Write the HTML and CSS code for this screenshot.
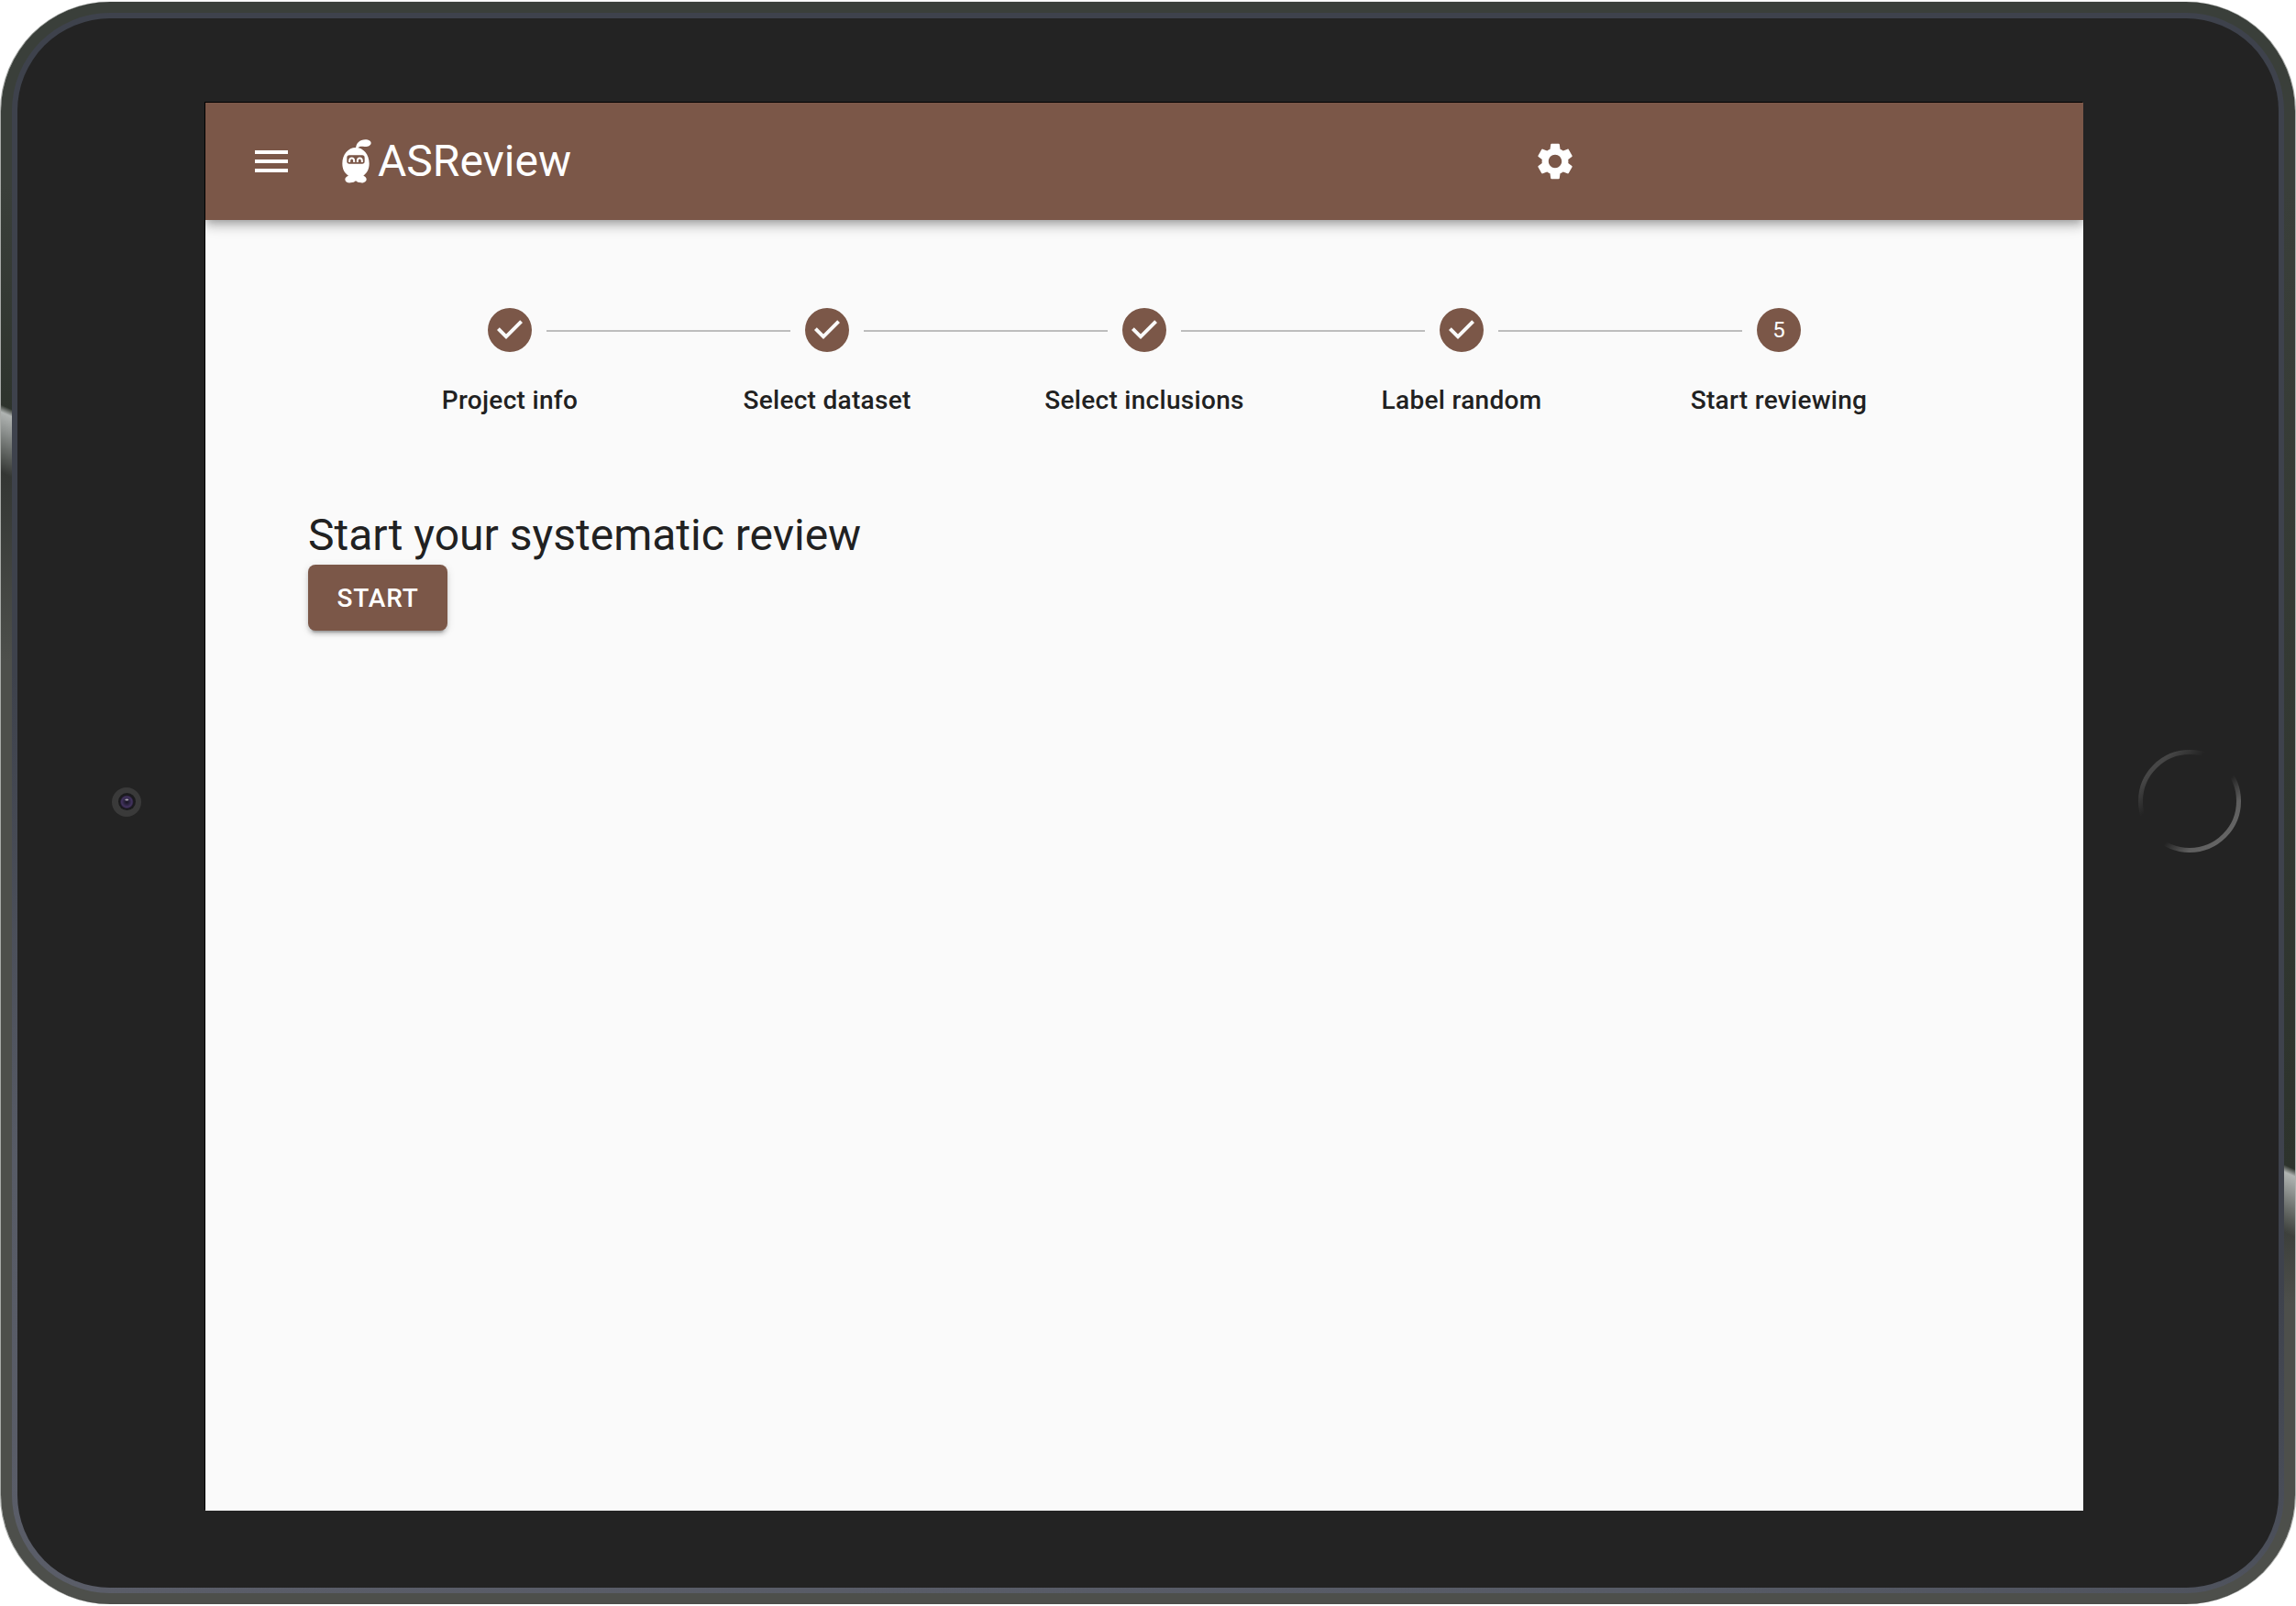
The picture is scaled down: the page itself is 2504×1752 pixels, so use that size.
FILE: index.html
```html
<!DOCTYPE html>
<html lang="en">
<head>
<meta charset="utf-8">
<title>ASReview</title>
<link rel="stylesheet" href="styles.css">
</head>
<body>
<div class="tablet">
  <span class="glint glint-left"></span>
  <span class="glint glint-right"></span>
  <div class="rim">
    <div class="bezel">
      <svg class="camera" viewBox="0 0 32 32" aria-hidden="true">
        <defs>
          <radialGradient id="lens">
            <stop offset="0" stop-color="#17131f"/>
            <stop offset=".4" stop-color="#2c2440"/>
            <stop offset=".75" stop-color="#43335f"/>
            <stop offset="1" stop-color="#17151c"/>
          </radialGradient>
        </defs>
        <circle cx="16" cy="16" r="16" fill="#3a3a3a"/>
        <circle cx="16.5" cy="15.5" r="9.5" fill="#1b1b1d"/>
        <circle cx="16.3" cy="15.8" r="7.6" fill="url(#lens)"/>
        <ellipse cx="16.3" cy="13.5" rx="2" ry="1" fill="#a8a4b0"/>
      </svg>
      <main class="screen">
        <header class="app-bar">
          <svg class="icon" viewBox="0 0 24 24"><path d="M3 18h18v-2H3v2zm0-5h18v-2H3v2zm0-7v2h18V6H3z"/></svg>
          <div class="brand">
            <svg class="mascot" viewBox="0 0 96 144">
              <path d="M45 30C46 13 58 1 76 1C88 1 95 6 95 12C95 20 84 25 74 24C64 23 57 21 51 29Z"/>
              <path d="M45 27C70 27 89 50 89 79C89 99 81 111 70 119C77 121 80 126 80 131C80 138 71 143 62 142C54 142 49 139 45 136C41 139 36 142 28 142C18 143 10 138 10 131C10 126 14 121 21 119C9 111 1 99 1 79C1 50 20 27 45 27Z"/>
              <rect class="visor" x="16" y="52" width="58" height="28" rx="8"/>
              <path class="eyes" d="M24.500 75V70Q25 61.500 32 61.500Q39 61.500 39.500 70V75M50.500 75V70Q51 61.500 58 61.500Q65 61.500 65.500 70V75"/>
            </svg>
            <span class="brand-name">ASReview</span>
          </div>
          <svg class="icon settings" viewBox="0 0 24 24"><path d="M19.14 12.94c.04-.3.06-.61.06-.94 0-.32-.02-.64-.07-.94l2.03-1.58c.18-.14.23-.41.12-.61l-1.92-3.32c-.12-.22-.37-.29-.59-.22l-2.39.96c-.5-.38-1.03-.7-1.62-.94l-.36-2.54c-.04-.24-.24-.41-.48-.41h-3.84c-.24 0-.43.17-.47.41l-.36 2.54c-.59.24-1.13.57-1.62.94l-2.39-.96c-.22-.08-.47 0-.59.22L2.74 8.87c-.12.21-.08.47.12.61l2.03 1.58c-.05.3-.09.63-.09.94s.02.64.07.94l-2.03 1.58c-.18.14-.23.41-.12.61l1.92 3.32c.12.22.37.29.59.22l2.39-.96c.5.38 1.03.7 1.62.94l.36 2.54c.05.24.24.41.48.41h3.84c.24 0 .44-.17.47-.41l.36-2.54c.59-.24 1.13-.56 1.62-.94l2.39.96c.22.08.47 0 .59-.22l1.92-3.32c.12-.22.07-.47-.12-.61l-2.01-1.58zM12 15.6c-1.98 0-3.6-1.62-3.6-3.6s1.62-3.6 3.6-3.6 3.6 1.62 3.6 3.6-1.62 3.6-3.6 3.6z"/></svg>
        </header>
        <section class="content">
          <ol class="stepper">
            <li class="step"><div class="track"><i></i><svg class="badge" viewBox="0 0 24 24"><path d="M12 0a12 12 0 1 0 0 24 12 12 0 0 0 0-24zm-2 17l-5-5 1.400-1.400 3.600 3.600 7.600-7.600L19 8l-9 9z"/></svg><i class="line"></i></div><span class="label">Project info</span></li>
            <li class="step"><div class="track"><i class="line"></i><svg class="badge" viewBox="0 0 24 24"><path d="M12 0a12 12 0 1 0 0 24 12 12 0 0 0 0-24zm-2 17l-5-5 1.400-1.400 3.600 3.600 7.600-7.600L19 8l-9 9z"/></svg><i class="line"></i></div><span class="label">Select dataset</span></li>
            <li class="step"><div class="track"><i class="line"></i><svg class="badge" viewBox="0 0 24 24"><path d="M12 0a12 12 0 1 0 0 24 12 12 0 0 0 0-24zm-2 17l-5-5 1.400-1.400 3.600 3.600 7.600-7.600L19 8l-9 9z"/></svg><i class="line"></i></div><span class="label">Select inclusions</span></li>
            <li class="step"><div class="track"><i class="line"></i><svg class="badge" viewBox="0 0 24 24"><path d="M12 0a12 12 0 1 0 0 24 12 12 0 0 0 0-24zm-2 17l-5-5 1.400-1.400 3.600 3.600 7.600-7.600L19 8l-9 9z"/></svg><i class="line"></i></div><span class="label">Label random</span></li>
            <li class="step"><div class="track"><i class="line"></i><span class="badge number">5</span><i></i></div><span class="label">Start reviewing</span></li>
          </ol>
          <h1 class="heading">Start your systematic review</h1>
          <button class="start" type="button">START</button>
        </section>
      </main>
      <svg class="home" viewBox="0 0 112 112" aria-hidden="true">
        <defs>
          <linearGradient id="ring" x1="0" y1="0" x2="1" y2="1">
            <stop offset="0" stop-color="#4c4c4c"/>
            <stop offset=".16" stop-color="#464646"/>
            <stop offset=".33" stop-color="#232323"/>
            <stop offset=".59" stop-color="#232323"/>
            <stop offset=".75" stop-color="#5e5e5e"/>
            <stop offset="1" stop-color="#6c6c6c"/>
          </linearGradient>
        </defs>
        <circle cx="56" cy="56" r="53.500" fill="none" stroke="url(#ring)" stroke-width="5"/>
      </svg>
    </div>
  </div>
</div>
</body>
</html>
```
FILE: styles.css
```css
* {
  box-sizing: border-box;
}

body {
  margin: 0;
  background: #fff;
  font-family: Roboto, "Liberation Sans", sans-serif;
  color: #212121;
  overflow: hidden;
}

/* Device shell */
.tablet {
  position: relative;
  width: 2502px;
  height: 1748px;
  margin: 2px 1px;
  padding: 12px;
  border-radius: 119px;
  overflow: hidden;
  background:
    linear-gradient(#3a3f3a 0, #3a3f3a 200px, #2d332c 450px, #333633 512px, #4d4f4b 720px) left / 50% 100% no-repeat,
    linear-gradient(#3a3f3a 0, #3a3f3a 200px, #2d332c 1275px, #3c3f3b 1340px, #4d4f4b 1420px) right / 50% 100% no-repeat;
  box-shadow: -1px 0 0 rgba(60, 66, 60, 0.45), 1px 0 0 rgba(60, 66, 60, 0.4), 0 -1px 0 rgba(60, 66, 60, 0.1);
}

.glint {
  position: absolute;
  width: 12px;
  height: 74px;
  transform: skewY(24deg);
  background: linear-gradient(rgba(176, 180, 178, 0), #b0b4b2 8px, #8b8f8d 28px, rgba(60, 64, 60, 0));
}

.glint-left {
  left: 0;
  top: 442px;
}

.glint-right {
  right: 0;
  top: 1271px;
}

.rim {
  height: 100%;
  padding: 6px;
  border-radius: 107px;
  background: linear-gradient(15deg, #5a5d68 0, #575b66 20%, #3e424c 42%);
}

.bezel {
  display: flex;
  align-items: center;
  height: 100%;
  padding: 92px 41px 84px 103px;
  border-radius: 101px;
  background: #232323;
}

.camera {
  flex: none;
  width: 32px;
  height: 32px;
  margin-right: 70px;
  margin-top: -11px;
}

.home {
  flex: none;
  width: 112px;
  height: 112px;
  margin-left: 60px;
  margin-top: -12px;
}

/* Application */
.screen {
  flex: none;
  width: 2048px;
  height: 1536px;
  background: #fafafa;
  box-shadow: -1px -1px 0 #000;
}

.app-bar {
  display: flex;
  align-items: center;
  height: 128px;
  padding: 0 552px 0 48px;
  background: #7b5748;
  color: #fff;
  box-shadow:
    0 4px 8px -2px rgba(0, 0, 0, 0.2),
    0 8px 10px 0 rgba(0, 0, 0, 0.14),
    0 2px 20px 0 rgba(0, 0, 0, 0.12);
  clip-path: inset(0 0 -40px 0);
}

.icon {
  width: 48px;
  height: 48px;
  fill: currentColor;
}

.settings {
  margin-left: auto;
}

.brand {
  display: flex;
  align-items: center;
  margin-left: 53px;
}

.mascot {
  width: 32px;
  height: 48px;
  margin-right: 7px;
  fill: #fff;
}

.mascot .visor {
  fill: #7b5748;
}

.mascot .eyes {
  fill: none;
  stroke: #fff;
  stroke-width: 6;
}

.brand-name {
  font-size: 48px;
  line-height: 64px;
}

.content {
  padding: 48px 112px;
}

.stepper {
  display: flex;
  margin: 0;
  padding: 48px 47px;
  list-style: none;
}

.step {
  flex: 1;
  text-align: center;
}

.track {
  display: flex;
  align-items: center;
  gap: 16px;
}

.track i {
  flex: 1;
  height: 2px;
  margin-top: 2px;
}

.track .line {
  background: #bdbdbd;
}

.badge {
  flex: none;
  width: 48px;
  height: 48px;
  fill: #7b5748;
}

.number {
  border-radius: 50%;
  background: #7b5748;
  color: #fff;
  font-size: 24px;
  line-height: 48px;
}

.label {
  display: block;
  margin-top: 33px;
  font-size: 28px;
  font-weight: 500;
  line-height: 40px;
  letter-spacing: 0.01071em;
}

.heading {
  margin: 47px 0 0;
  font-size: 48px;
  font-weight: 400;
  line-height: 64px;
}

.start {
  display: block;
  width: 152px;
  height: 72px;
  padding: 13px 0 11px;
  border: 0;
  border-radius: 8px;
  background: #7b5748;
  color: #fff;
  font: 500 28px/48px Roboto, "Liberation Sans", sans-serif;
  letter-spacing: 0.02857em;
  box-shadow:
    0 6px 2px -4px rgba(0, 0, 0, 0.2),
    0 4px 4px 0 rgba(0, 0, 0, 0.14),
    0 2px 10px 0 rgba(0, 0, 0, 0.12);
}
```
